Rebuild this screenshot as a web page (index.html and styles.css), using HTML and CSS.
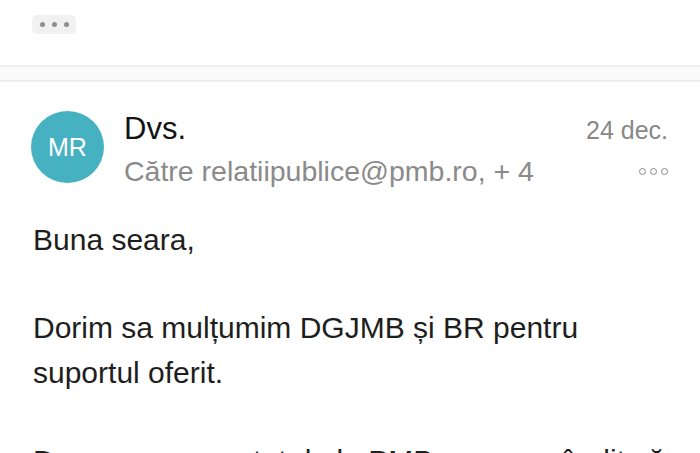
FILE: index.html
```html
<!DOCTYPE html>
<html lang="ro">
<head>
<meta charset="utf-8">
<link rel="stylesheet" href="styles.css">
</head>
<body>
<div class="top">
  <div class="pill"><span></span><span></span><span></span></div>
</div>
<div class="sep"></div>
<div class="msg">
  <div class="head">
    <div class="avatar">MR</div>
    <div class="who">
      <div class="name">Dvs.</div>
      <div class="to">Către relatiipublice@pmb.ro, + 4</div>
    </div>
    <div class="meta">
      <div class="date">24 dec.</div>
      <div class="more"><i></i><i></i><i></i></div>
    </div>
  </div>
  <div class="body">
    <p>Buna seara,</p>
    <p>Dorim sa mulțumim DGJMB și BR pentru<br>suportul oferit.</p>
    <p>Deoarece acum tot de la PMB, ne-am gândit să vă</p>
  </div>
</div>
</body>
</html>
```
FILE: styles.css
```css
html, body {
  margin: 0;
  padding: 0;
  background: #ffffff;
  width: 700px;
  height: 453px;
  overflow: hidden;
  font-family: "Liberation Sans", Arial, sans-serif;
}
.top {
  height: 65px;
  padding: 15px 0 0 32px;
  box-sizing: border-box;
}
.pill {
  width: 44px;
  height: 19px;
  background: #f1f1f1;
  border-radius: 5px;
  display: flex;
  align-items: center;
  justify-content: center;
  gap: 7px;
}
.pill span {
  width: 5px;
  height: 5px;
  border-radius: 50%;
  background: #8d8d8d;
}
.sep {
  height: 13px;
  border-top: 2px solid #efefef;
  border-bottom: 2px solid #efefef;
  background: #fafafa;
}
.msg {
  padding: 29px 32px 0 31px;
}
.head {
  display: flex;
  align-items: flex-start;
}
.avatar {
  width: 73px;
  height: 72px;
  border-radius: 50%;
  background: #46b2c1;
  color: #ffffff;
  font-size: 25px;
  display: flex;
  align-items: center;
  justify-content: center;
  flex: none;
}
.who {
  flex: 1;
  margin-left: 20px;
  white-space: nowrap;
}
.name {
  font-size: 31px;
  color: #141414;
  line-height: 36px;
}
.to {
  font-size: 28.5px;
  color: #8a8a8a;
  line-height: 36px;
  margin-top: 6px;
}
.meta {
  display: flex;
  flex-direction: column;
  align-items: flex-end;
  margin-top: 4px;
}
.date {
  font-size: 25px;
  color: #888888;
  line-height: 30px;
}
.more {
  display: flex;
  gap: 4px;
  margin-top: 23px;
}
.more i {
  width: 5px;
  height: 5px;
  border: 1.4px solid #8a8a8a;
  border-radius: 50%;
}
.body {
  padding: 28px 0 0 2px;
  font-size: 30px;
  color: #1e1e1e;
  line-height: 45px;
  white-space: nowrap;
  overflow: hidden;
}
.body p {
  margin: 0 0 43px 0;
}
```
